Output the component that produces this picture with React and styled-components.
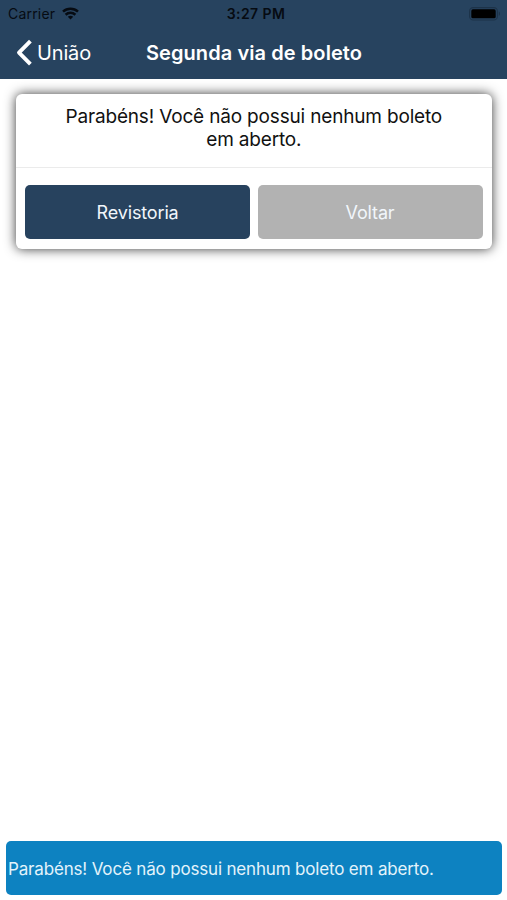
import React from 'react';
import styled, { createGlobalStyle } from 'styled-components';

const message = 'Parabéns! Você não possui nenhum boleto em aberto.';

export default function App() {
    return (
        <Screen>
            <GlobalStyle />
            <Header>
                <StatusBar>
                    <Carrier>
                        <CarrierName>Carrier</CarrierName>
                        <WifiIcon />
                    </Carrier>
                    <Clock>3:27 PM</Clock>
                    <BatteryIcon />
                </StatusBar>
                <NavBar>
                    <BackButton>
                        <BackIcon />
                        <BackLabel>União</BackLabel>
                    </BackButton>
                    <Title>Segunda via de boleto</Title>
                </NavBar>
            </Header>
            <Content>
                <Card>
                    <CardMessage>{message}</CardMessage>
                    <CardActions>
                        <Button $color="#27425e">Revistoria</Button>
                        <Button $color="#b2b2b2">Voltar</Button>
                    </CardActions>
                </Card>
            </Content>
            <Toast>
                <ToastText>{message}</ToastText>
            </Toast>
        </Screen>
    );
}

function WifiIcon() {
    return (
        <svg width="17" height="13" viewBox="0 0 17 13" fill="none" stroke="#060b12" strokeWidth="2.5">
            <path d="M1 4.7C5.2 0.8 11.8 0.8 16 4.7" />
            <path d="M3.6 7.7C6.4 5.2 10.6 5.2 13.4 7.7" />
            <path d="M8.5 12.5L5.8 9.8C7.3 8.5 9.7 8.5 11.2 9.8Z" fill="#060b12" stroke="none" />
        </svg>
    );
}

function BatteryIcon() {
    return (
        <svg width="32" height="14" viewBox="0 0 32 14">
            <rect x="0.6" y="0.6" width="27.8" height="12.4" rx="3.6" fill="none" stroke="#1d3349" strokeWidth="1.1" />
            <rect x="2.3" y="2.3" width="24.4" height="9" rx="1.6" fill="#000000" />
            <path d="M29.8 4.6C31.4 5.2 31.4 8.4 29.8 9Z" fill="#1d3349" />
        </svg>
    );
}

function BackIcon() {
    return (
        <svg width="17" height="28" viewBox="0 0 17 28" fill="none" stroke="#ffffff" strokeWidth="3.9">
            <path d="M15.4 2.2L4 13.7L15.4 25.2" strokeLinejoin="round" />
        </svg>
    );
}

const GlobalStyle = createGlobalStyle`
    * {
        box-sizing: border-box;
    }

    body {
        margin: 0;
        background: #ffffff;
        font-family: Inter, "Liberation Sans", sans-serif;
    }
`;

const Screen = styled.div`
    display: flex;
    flex-direction: column;
    width: 100%;
    height: 100vh;
    overflow: hidden;
`;

const Header = styled.header`
    flex: none;
    height: 79px;
    background: #27435f;
`;

const StatusBar = styled.div`
    display: grid;
    grid-template-columns: 1fr auto 1fr;
    align-items: center;
    height: 27px;
    padding: 0 6px 0 8px;
    color: #060b12;

    > svg {
        justify-self: end;
    }
`;

const Carrier = styled.div`
    display: flex;
    align-items: center;
    gap: 7px;
`;

const CarrierName = styled.span`
    font-size: 14px;
    letter-spacing: 0.2px;
`;

const Clock = styled.span`
    padding-left: 3px;
    font-size: 14px;
    font-weight: 600;
    letter-spacing: 0.4px;
`;

const NavBar = styled.nav`
    display: grid;
    grid-template-columns: 1fr auto 1fr;
    align-items: center;
    height: 51px;
    padding: 0 14px 0 15px;
    color: #ffffff;
`;

const BackButton = styled.div`
    display: flex;
    align-items: center;
    gap: 5px;
    height: 28px;
`;

const BackLabel = styled.span`
    font-size: 20px;
    letter-spacing: -0.15px;
`;

const Title = styled.h1`
    margin: 0;
    font-size: 20px;
    font-weight: 600;
    letter-spacing: 0.08px;
`;

const Content = styled.main`
    flex: 1;
    padding: 15px 15px 0 15.6px;
`;

const Card = styled.section`
    height: 154.5px;
    border-radius: 6px;
    background: #ffffff;
    box-shadow: 0 0 12px rgba(0, 0, 0, 0.78);
`;

const CardMessage = styled.p`
    height: 74px;
    margin: 0;
    padding: 10.6px 40px 0;
    border-bottom: 1px solid #ebebeb;
    color: #111111;
    font-size: 19px;
    line-height: 23.4px;
    letter-spacing: -0.17px;
    text-align: center;
`;

const CardActions = styled.div`
    display: grid;
    grid-template-columns: 1fr 1fr;
    gap: 7.5px;
    padding: 17px 9.5px 10px;
`;

const Button = styled.button`
    height: 54px;
    padding: 0;
    border: none;
    border-radius: 5px;
    background: ${(props) => props.$color};
    color: #f1f6fb;
    font-family: inherit;
    font-size: 18px;
    letter-spacing: -0.15px;
`;

const Toast = styled.footer`
    display: flex;
    flex: none;
    align-items: center;
    height: 54px;
    margin: 0 5px 5px 6px;
    padding: 1px 0 0 2px;
    border-radius: 5px;
    background: #0d82c1;
`;

const ToastText = styled.span`
    color: #e3f3fb;
    font-size: 17px;
    letter-spacing: -0.17px;
    white-space: nowrap;
`;
